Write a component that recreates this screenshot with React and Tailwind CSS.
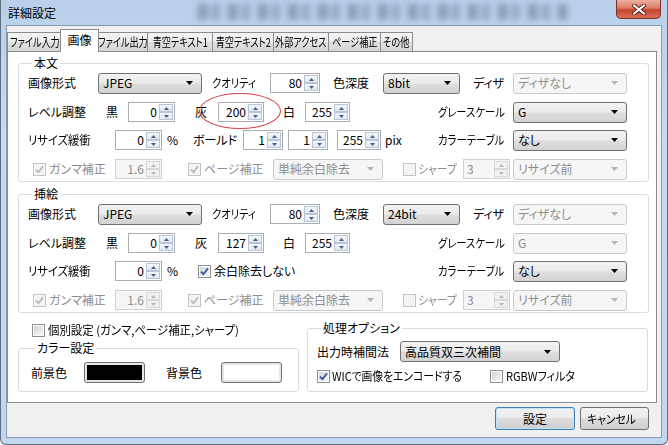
import clsx from "clsx";

function Arrow({ disabled }) {
  return (
    <svg width="7" height="4" viewBox="0 0 7 4">
      <path d="M0 0h7L3.5 4z" fill={disabled ? "#b5b5b5" : "#000"} />
    </svg>
  );
}

function Combo({ value, disabled, className }) {
  return (
    <div
      className={clsx(
        "flex h-[21px] shrink-0 items-center justify-between rounded-[3px] border pl-[4px] pr-[8px] whitespace-nowrap",
        disabled
          ? "border-[#c8cacd] bg-[#f6f6f6] text-[#8d8d8d]"
          : "border-[#707070] bg-[linear-gradient(#f3f3f3,#ebebeb_45%,#dddddd_55%,#d3d3d3)] text-black",
        className
      )}
    >
      <span>{value}</span>
      <Arrow disabled={disabled} />
    </div>
  );
}

function SpinBtn({ up, disabled }) {
  return (
    <div
      className={clsx(
        "flex h-1/2 items-center justify-center border",
        disabled ? "border-[#d8d8d8] bg-[#f1f1f1]" : "border-[#b8c6d8] bg-[linear-gradient(#f4f8fc,#dfe8f3)]"
      )}
    >
      <svg width="5" height="3" viewBox="0 0 5 3">
        <path d={up ? "M0 3h5L2.5 0z" : "M0 0h5L2.5 3z"} fill={disabled ? "#b8b8b8" : "#4b5f83"} />
      </svg>
    </div>
  );
}

function Spin({ value, disabled, left, className }) {
  return (
    <div
      className={clsx(
        "flex h-[20px] shrink-0 border p-[1px]",
        disabled ? "border-[#cfd1d5] bg-[#f6f6f6] text-[#8d8d8d]" : "border-[#abadb3] bg-white text-black",
        className
      )}
    >
      <div className={clsx("flex-1 leading-[16px]", left ? "pl-[2px] text-left" : "pr-[2px] text-right")}>{value}</div>
      <div className="flex w-[14px] flex-col">
        <SpinBtn up disabled={disabled} />
        <SpinBtn disabled={disabled} />
      </div>
    </div>
  );
}

function Check({ checked, disabled, className }) {
  return (
    <span
      className={clsx(
        "flex h-[13px] w-[13px] shrink-0 items-center justify-center border p-[1px]",
        disabled ? "border-[#c3c3c3] bg-[#f6f6f6]" : "border-[#8e8f8f] bg-white",
        className
      )}
    >
      <span
        className={clsx(
          "flex h-full w-full items-center justify-center",
          disabled ? "bg-[#f3f3f3]" : "bg-[linear-gradient(135deg,#cfd3d8,#f7f7f7)]"
        )}
      >
        {checked && (
          <svg width="9" height="9" viewBox="0 0 9 9">
            <path
              d="M1 4.6l2.4 2.6L8 1.4"
              stroke={disabled ? "#b9b9b9" : "#3a55a0"}
              strokeWidth="1.8"
              fill="none"
            />
          </svg>
        )}
      </span>
    </span>
  );
}

function Group({ title, className, children }) {
  return (
    <fieldset className={clsx("rounded-[3px] border border-[#d5dfe5]", className)}>
      <legend className="ml-[4px] px-[2px] leading-[14px]">{title}</legend>
      {children}
    </fieldset>
  );
}

function Cell({ className, children }) {
  return <div className={clsx("shrink-0 whitespace-nowrap", className)}>{children}</div>;
}

// katakana in the dialog font runs narrower than Noto's
function Narrow({ children, className = "scale-x-[0.86]" }) {
  return <span className={clsx("inline-block origin-left", className)}>{children}</span>;
}

function GammaRow({ className }) {
  return (
    <div className={clsx("flex h-[20px] items-center", className)}>
      <Check checked disabled className="ml-[5px]" />
      <Cell className="w-[69px] pl-[3px] text-[#8d8d8d]">ガンマ補正</Cell>
      <Spin value="1.6" disabled className="w-[47px]" />
      <Check checked disabled className="ml-[26px]" />
      <Cell className="w-[72px] pl-[3px] text-[#8d8d8d]">ページ補正</Cell>
      <Combo value="単純余白除去" disabled className="w-[110px]" />
      <Check disabled className="ml-[20px]" />
      <Cell className="w-[47px] pl-[2px] text-[#8d8d8d]">
        <Narrow className="scale-x-[0.9]">シャープ</Narrow>
      </Cell>
      <Spin value="3" disabled left className="w-[47px]" />
      <Combo value="リサイズ前" disabled className="ml-[3px] w-[114px]" />
    </div>
  );
}

function FormatRow({ depth }) {
  return (
    <div className="flex h-[20px] items-center">
      <Cell className="w-[70px]">画像形式</Cell>
      <Combo value="JPEG" className="w-[104px]" />
      <Cell className="ml-[10px] w-[58px]">
        <Narrow>クオリティ</Narrow>
      </Cell>
      <Spin value="80" className="w-[50px]" />
      <Cell className="ml-[13px] w-[50px]">色深度</Cell>
      <Combo value={depth} className="w-[77px]" />
      <Cell className="ml-[13px] w-[40px]">ディザ</Cell>
      <Combo value="ディザなし" disabled className="w-[114px]" />
    </div>
  );
}

function LevelRow({ gray, grayDisabled }) {
  return (
    <div className="mt-[9px] flex h-[20px] items-center">
      <Cell className="w-[78px]">レベル調整</Cell>
      <Cell className="w-[22px]">黒</Cell>
      <Spin value="0" className="w-[47px]" />
      <Cell className="ml-[20px] w-[23px]">灰</Cell>
      <Spin value={gray} className="w-[46px]" />
      <Cell className="ml-[19px] w-[22px]">白</Cell>
      <Spin value="255" className="w-[45px]" />
      <Cell className="w-[88px]" />
      <Cell className="w-[75px]">
        <Narrow>グレースケール</Narrow>
      </Cell>
      <Combo value="G" disabled={grayDisabled} className="w-[114px]" />
    </div>
  );
}

const tabs = [
  ["ファイル入力", "w-[55px]"],
  ["画像", "w-[39px]", true],
  ["ファイル出力", "w-[50px]"],
  ["青空テキスト1", "w-[65px]"],
  ["青空テキスト2", "w-[61px]"],
  ["外部アクセス", "w-[55px]"],
  ["ページ補正", "w-[52px]"],
  ["その他", "w-[33px]"],
];

export default function App() {
  return (
    <div className="relative h-[445px] w-[668px] overflow-hidden rounded-b-[6px] border-x border-b border-[#5f6f82] bg-[linear-gradient(180deg,#b8d0ea,#c6daf1_30%,#c2d7ef)] font-['Noto_Sans_CJK_JP',sans-serif] text-[12px] leading-[14px] text-black [font-feature-settings:'palt']">
      {/* title bar */}
      <div className="flex h-[25px] items-start">
        <div className="ml-[7px] mt-[6px] w-[150px] shrink-0">詳細設定</div>
        <div className="mt-[4px] ml-[40px] h-[16px] w-[370px] bg-[repeating-linear-gradient(90deg,#54657d_0_9px,#a9bfd8_9px_14px,#6f819a_14px_22px,transparent_22px_30px)] opacity-50 blur-[3px]" />
        <div className="ml-auto mr-[6px] flex h-[19px] w-[45px] items-center justify-center rounded-b-[5px] border border-t-0 border-[#7a3126] bg-[linear-gradient(#eab0a2,#dc7a63_45%,#c4452d_55%,#d86f55)]">
          <svg width="14" height="11" viewBox="0 0 14 11">
            <path d="M2 1.5l10 8M12 1.5l-10 8" stroke="#5a2018" strokeWidth="4" strokeLinecap="round" />
            <path d="M2 1.5l10 8M12 1.5l-10 8" stroke="#fff" strokeWidth="2.2" strokeLinecap="round" />
          </svg>
        </div>
      </div>

      {/* client area */}
      <div className="ml-[5px] h-[413px] w-[656px] border border-[#8a9cb3] bg-[#f0f0f0]">
        {/* tabs */}
        <div className="flex h-[25px] items-end">
          {tabs.map(([label, w, sel], i) =>
            sel ? (
              <div
                key={label}
                className={clsx(
                  "relative z-10 -mx-[2px] -mb-[1px] flex h-[23px] shrink-0 items-start justify-center border border-b-0 border-[#898c95] bg-white pt-[3px] whitespace-nowrap",
                  w
                )}
              >
                {label}
              </div>
            ) : (
              <div
                key={label}
                className={clsx(
                  "flex h-[19px] shrink-0 items-center justify-center border-t border-l border-[#898c95] bg-[linear-gradient(#f4f4f4,#ececec_50%,#e0e0e0_50%,#d6d6d6)] whitespace-nowrap",
                  i === tabs.length - 1 && "border-r",
                  w
                )}
              >
                <span className="inline-block scale-x-[0.76]">{label}</span>
              </div>
            )
          )}
        </div>

        {/* tab panel */}
        <div className="h-[352px] w-[650px] border border-[#898c95] bg-white">
          <Group title="本文" className="mt-[4px] ml-[10px] w-[631px] pt-[3px] pb-[2px] pl-[9px]">
            <FormatRow depth="8bit" />
            <LevelRow gray="200" />
            <div className="mt-[8px] flex h-[20px] items-center">
              <Cell className="w-[87px]">
                <Narrow className="scale-x-[0.94]">リサイズ緩衝</Narrow>
              </Cell>
              <Spin value="0" className="w-[47px]" />
              <Cell className="ml-[5px] w-[26px]">%</Cell>
              <Cell className="w-[50px]">ボールド</Cell>
              <Spin value="1" className="w-[40px]" />
              <Spin value="1" className="ml-[5px] w-[40px]" />
              <Spin value="255" className="ml-[9px] w-[44px]" />
              <Cell className="w-[57px] pl-[4px]">pix</Cell>
              <Cell className="w-[75px]">
                <Narrow>カラーテーブル</Narrow>
              </Cell>
              <Combo value="なし" className="w-[114px]" />
            </div>
            <GammaRow className="mt-[9px]" />
          </Group>

          <Group title="挿絵" className="mt-[5px] ml-[10px] w-[631px] pt-[3px] pb-[2px] pl-[9px]">
            <FormatRow depth="24bit" />
            <LevelRow gray="127" grayDisabled />
            <div className="mt-[8px] flex h-[20px] items-center">
              <Cell className="w-[87px]">
                <Narrow className="scale-x-[0.94]">リサイズ緩衝</Narrow>
              </Cell>
              <Spin value="0" className="w-[47px]" />
              <Cell className="ml-[5px] w-[26px]">%</Cell>
              <Check checked className="ml-[5px]" />
              <Cell className="w-[227px] pl-[3px]">余白除去しない</Cell>
              <Cell className="w-[75px]">
                <Narrow>カラーテーブル</Narrow>
              </Cell>
              <Combo value="なし" className="w-[114px]" />
            </div>
            <GammaRow className="mt-[9px]" />
          </Group>

          <div className="flex items-start">
            <div className="ml-[10px] mt-[9px] w-[281px] shrink-0">
              <div className="flex h-[16px] items-center">
                <Check className="ml-[14px]" />
                <span className="ml-[3px] inline-block origin-left scale-x-[0.95] whitespace-nowrap">
                  個別設定 (ガンマ,ページ補正,シャープ)
                </span>
              </div>
              <Group title="カラー設定" className="mt-[3px] w-[281px] pt-[7px] pb-[8px] pl-[12px]">
                <div className="flex h-[21px] items-center">
                  <Cell className="w-[53px]">前景色</Cell>
                  <div className="h-[21px] w-[61px] rounded-[3px] border border-[#707070] bg-[#e6e6e6] p-[2px]">
                    <div className="h-full w-full bg-black" />
                  </div>
                  <Cell className="ml-[21px] w-[55px]">背景色</Cell>
                  <div className="h-[21px] w-[61px] rounded-[3px] border border-[#707070] bg-[#e6e6e6] p-[2px]">
                    <div className="h-full w-full bg-white" />
                  </div>
                </div>
              </Group>
            </div>

            <Group title="処理オプション" className="mt-[8px] ml-[8px] w-[341px] pt-[6px] pb-[7px] pl-[9px]">
              <div className="flex h-[21px] items-center">
                <Cell className="w-[83px]">出力時補間法</Cell>
                <Combo value="高品質双三次補間" className="w-[160px]" />
              </div>
              <div className="mt-[6px] flex h-[16px] items-center">
                <Check checked />
                <Cell className="w-[160px] pl-[2px]">
                  <Narrow className="scale-x-[0.9]">WICで画像をエンコードする</Narrow>
                </Cell>
                <Check />
                <Cell className="pl-[3px]">
                  <Narrow className="scale-x-[0.92]">RGBWフィルタ</Narrow>
                </Cell>
              </div>
            </Group>
          </div>
        </div>

        {/* buttons */}
        <div className="mt-[4px] flex justify-end gap-[5px] pr-[12px]">
          <button className="flex h-[23px] w-[80px] items-center justify-center rounded-[3px] border border-[#3c7fb1] bg-[linear-gradient(#f2f2f2,#ebebeb_50%,#dddddd_50%,#cfcfcf)] shadow-[inset_0_0_0_1px_#bfe3f7]">
            設定
          </button>
          <button className="flex h-[23px] w-[69px] items-center justify-center rounded-[3px] border border-[#707070] bg-[linear-gradient(#f2f2f2,#ebebeb_50%,#dddddd_50%,#cfcfcf)]">
            <Narrow className="scale-x-[0.9] origin-center">キャンセル</Narrow>
          </button>
        </div>
      </div>

      {/* red annotation ring */}
      <div className="pointer-events-none absolute left-[198px] top-[93px] h-[36px] w-[82px] rounded-[50%] border-[1.5px] border-[#d64545]" />
    </div>
  );
}
